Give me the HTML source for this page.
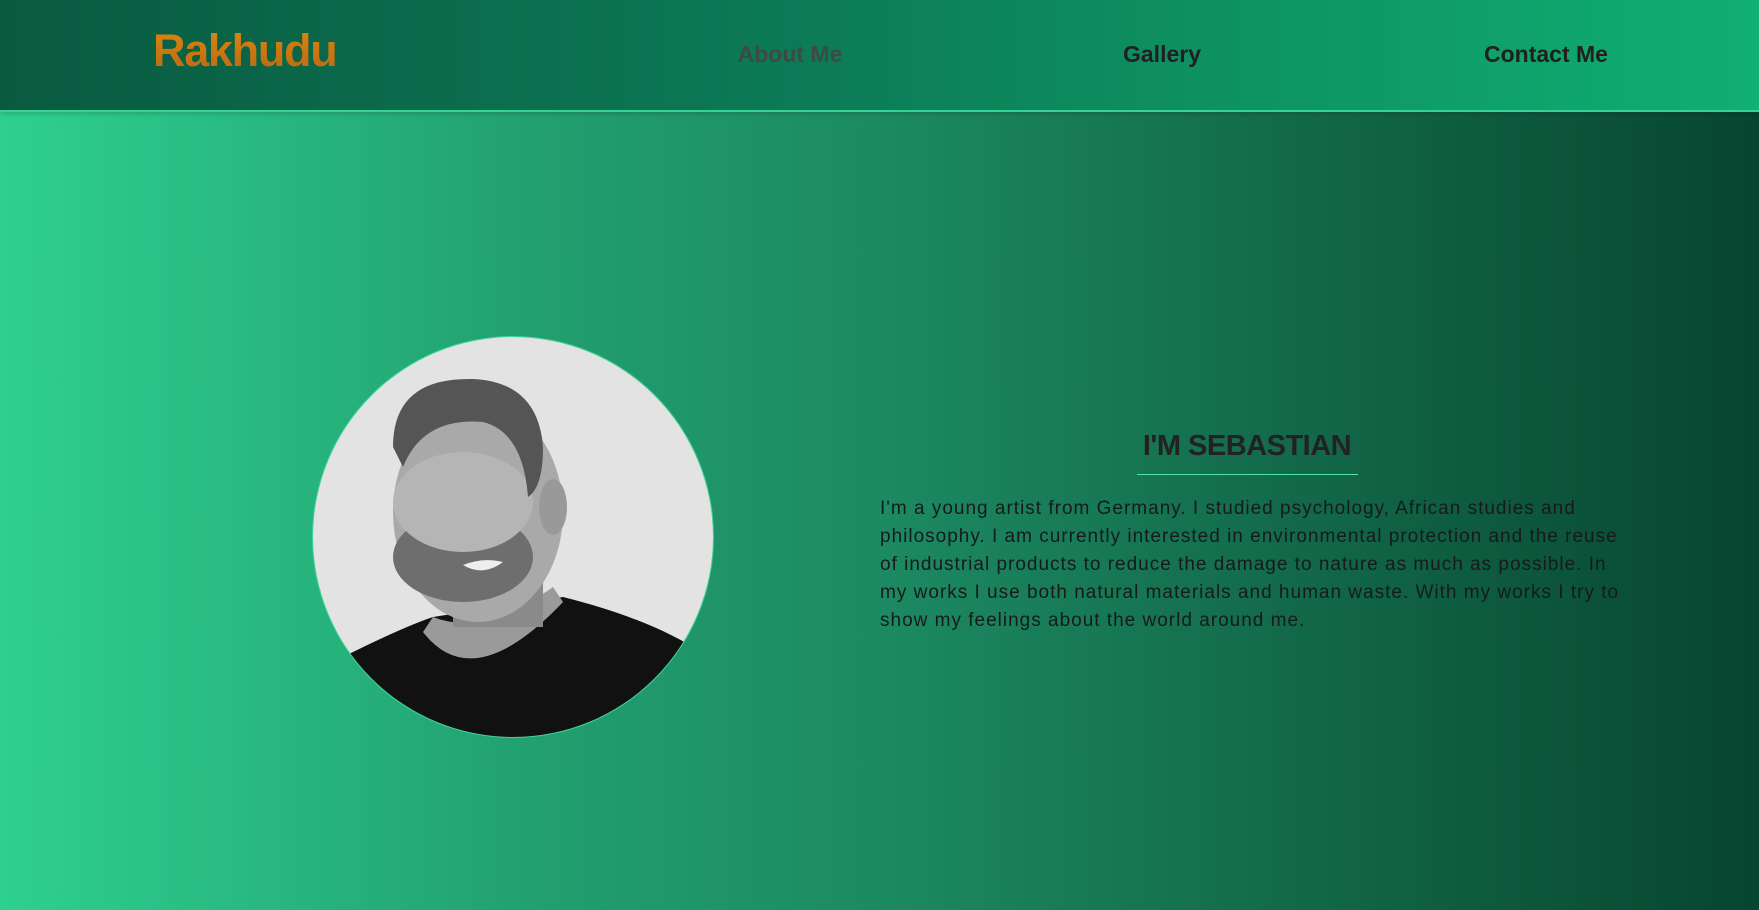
<!DOCTYPE html>
<html><head><meta charset="utf-8"><style>
html,body{margin:0;padding:0;width:1759px;height:910px;overflow:hidden;font-family:"Liberation Sans",sans-serif}
body{background:linear-gradient(90deg,#2ed08f 0%,#22a070 30%,#1c8a62 50%,#146e4d 70%,#074530 100%)}
header{position:absolute;left:0;top:0;width:1759px;height:110px;background:linear-gradient(90deg,#0a5a40 0%,#0c7a56 45%,#10af73 100%);border-bottom:2px solid #35d394;box-shadow:0 2px 4px rgba(0,0,0,.15)}
.logo{position:absolute;left:153px;top:25px;font-size:45px;font-weight:bold;letter-spacing:-1.3px;color:#d27d10;background:linear-gradient(180deg,#e0870e,#b66814);-webkit-background-clip:text;background-clip:text;-webkit-text-fill-color:transparent}
.nav{position:absolute;top:41px;font-size:23px;font-weight:bold;color:#202020;transform:translateX(-50%);white-space:nowrap}
.photo{position:absolute;left:313px;top:337px;width:400px;height:400px;border-radius:50%;overflow:hidden;box-shadow:0 0 0 1px #3ad69a}
h1{position:absolute;left:1047px;width:400px;text-align:center;top:430px;margin:0;font-size:29px;color:#222;letter-spacing:-.5px}
.ul{position:absolute;left:1137px;top:474px;width:221px;height:1px;background:#4ee3a8}
p{position:absolute;left:880px;top:495px;margin:0;font-size:19px;letter-spacing:1px;line-height:28px;color:#161a1f;white-space:nowrap}
</style></head><body>
<header>
<div class="logo">Rakhudu</div>
<div class="nav" style="left:790px;color:#3e4a44">About Me</div>
<div class="nav" style="left:1162px">Gallery</div>
<div class="nav" style="left:1546px">Contact Me</div>
</header>
<div class="photo"><svg width="400" height="400" viewBox="0 0 400 400">
<rect width="400" height="400" fill="#e3e3e3"/>
<path d="M30 320 Q90 290 120 280 L250 260 Q330 280 380 310 L400 400 L0 400Z" fill="#111"/>
<path d="M110 295 Q160 360 250 265 L240 250 Q170 300 120 280Z" fill="#9a9a9a"/>
<rect x="140" y="210" width="90" height="80" fill="#8a8a8a"/>
<ellipse cx="165" cy="175" rx="85" ry="110" fill="#a9a9a9"/>
<ellipse cx="150" cy="220" rx="70" ry="45" fill="#6e6e6e"/>
<ellipse cx="150" cy="165" rx="70" ry="50" fill="#b5b5b5"/>
<path d="M150 228 Q170 240 190 225 Q170 220 150 228Z" fill="#eee"/>
<path d="M80 110 Q80 40 160 42 Q225 45 230 110 Q230 150 215 160 Q210 95 170 85 Q110 80 90 130Z" fill="#555"/>
<ellipse cx="240" cy="170" rx="14" ry="28" fill="#999"/>
</svg></div>
<h1>I'M SEBASTIAN</h1>
<div class="ul"></div>
<p>I'm a young artist from Germany. I studied psychology, African studies and<br>philosophy. I am currently interested in environmental protection and the reuse<br>of industrial products to reduce the damage to nature as much as possible. In<br>my works I use both natural materials and human waste. With my works I try to<br>show my feelings about the world around me.</p>
</body></html>
